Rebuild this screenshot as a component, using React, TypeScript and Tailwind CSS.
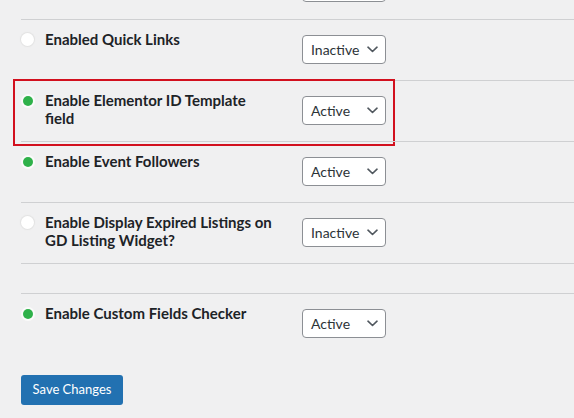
type Row = {
  label: string[];
  active: boolean;
  highlight?: boolean;
};

const rows: Row[] = [
  { label: ["Enabled Quick Links"], active: false },
  { label: ["Enable Elementor ID Template", "field"], active: true, highlight: true },
  { label: ["Enable Event Followers"], active: true },
  { label: ["Enable Display Expired Listings on", "GD Listing Widget?"], active: false },
];

const StatusDot = ({ active }: { active: boolean }) =>
  active ? (
    <span className="mt-[5px] ml-[2px] block h-[10px] w-[10px] rounded-full bg-[#2fb14a] shadow-[0_0_0_2px_#fbfbfb]" />
  ) : (
    <span className="mt-[3px] block h-[13px] w-[13px] rounded-full bg-white shadow-[0_0_1px_1px_#e2e2e2]" />
  );

const Chevron = () => (
  <svg width="11" height="7" viewBox="0 0 11 7" fill="none" className="shrink-0">
    <path d="M1 1.2 L5.5 5.5 L10 1.2" stroke="#50575e" strokeWidth="1.6" strokeLinecap="round" strokeLinejoin="round" />
  </svg>
);

const StatusSelect = ({ value }: { value: string }) => (
  <div className="mt-[5px] flex h-[29px] w-[84px] items-center justify-between rounded-[4px] border border-[#8c8f94] bg-white pl-[8px] pr-[7px] text-[14px] leading-[18px] text-[#2c3338]">
    <span>{value}</span>
    <Chevron />
  </div>
);

const SettingRow = ({ label, active, highlight }: Row) => (
  <div className="relative flex h-[61px] border-t border-[#cfd0d2] pt-[10px]">
    <div className="w-[24px] shrink-0">
      <StatusDot active={active} />
    </div>
    <div className="w-[257px] shrink-0 text-[15px] leading-[18px] font-bold text-[#1d2327]">
      {label.map((line, i) => (
        <div key={i}>{line}</div>
      ))}
    </div>
    <StatusSelect value={active ? "Active" : "Inactive"} />
    {highlight && (
      <div className="pointer-events-none absolute -top-[2px] -left-[8px] h-[67px] w-[382px] border-2 border-[#d2101e]" />
    )}
  </div>
);

export default function App() {
  return (
    <div
      className="h-[418px] w-[574px] overflow-hidden bg-[#f0f0f1]"
      style={{ fontFamily: "Lato, 'Open Sans', sans-serif" }}
    >
      <div className="-mt-[42px] pl-[21px]">
        {/* previous row, scrolled out of view: only its select's bottom edge shows */}
        <div className="flex h-[61px] pt-[10px]">
          <div className="w-[281px] shrink-0" />
          <StatusSelect value="" />
        </div>
        {rows.map((row, index) => (
          <SettingRow key={index} {...row} />
        ))}
        <div className="h-[30px] border-t border-[#cfd0d2]" />
        <SettingRow label={["Enable Custom Fields Checker"]} active={true} />
        <button className="mt-[21px] h-[30px] w-[102px] rounded-[3px] bg-[#2271b1] text-[13px] text-white">
          Save Changes
        </button>
      </div>
    </div>
  );
}
